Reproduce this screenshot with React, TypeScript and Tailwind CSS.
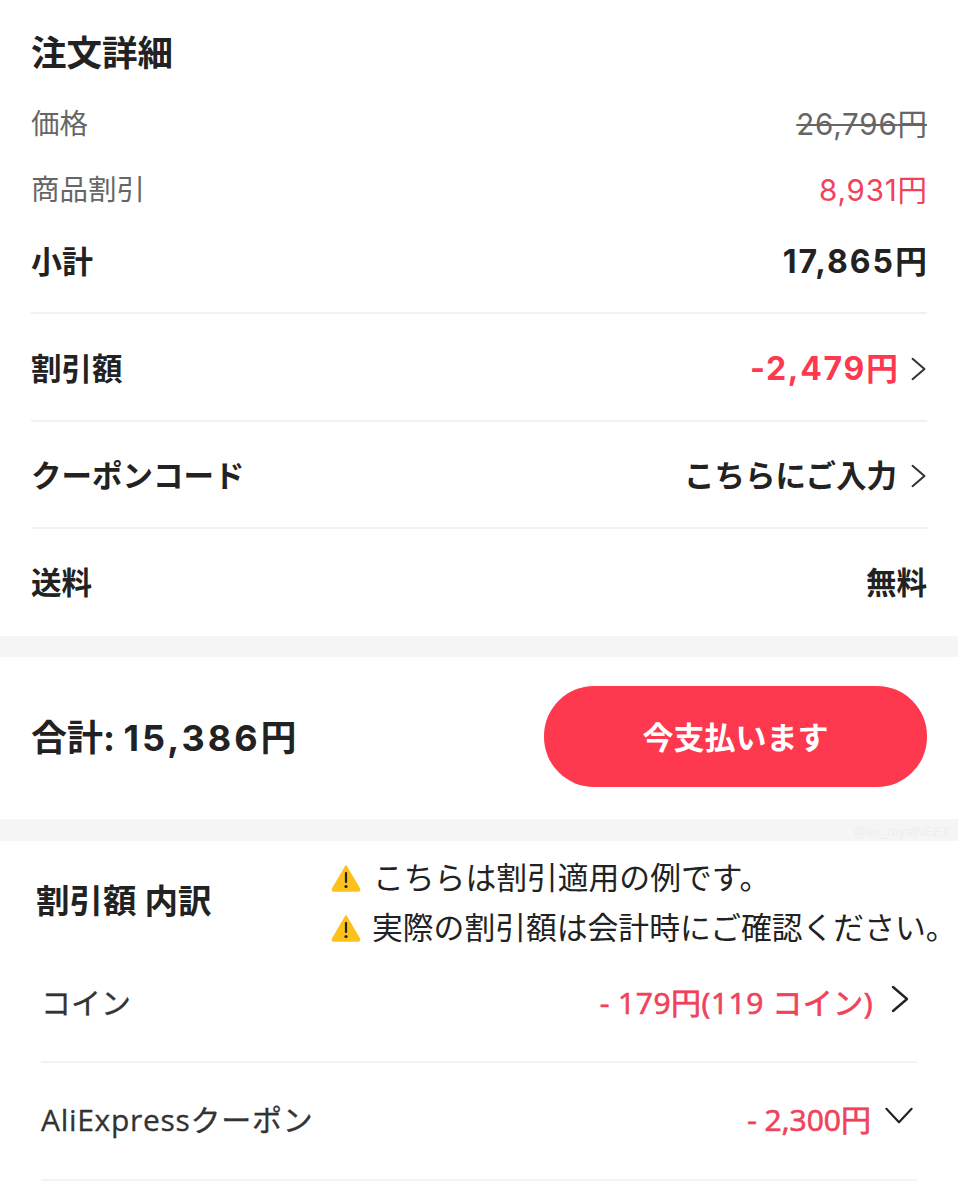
import type { ReactNode } from 'react';

const FONT = "font-['Inter','Noto_Sans_CJK_JP',sans-serif]";
const FONT_LOWER = "font-['Open_Sans','Noto_Sans_CJK_JP',sans-serif]";
const MEDIUM = '[-webkit-text-stroke:0.7px_currentColor]';

function ChevronRight({ className }: { className?: string }) {
    return (
        <svg viewBox="0 0 20 28" fill="none" className={className}>
            <path d="M3 2 L17 14 L3 26" stroke="currentColor" strokeWidth="2.4" strokeLinecap="round" strokeLinejoin="round" />
        </svg>
    );
}

function ChevronDown({ className }: { className?: string }) {
    return (
        <svg viewBox="0 0 32 20" fill="none" className={className}>
            <path d="M2 2 L16 17 L30 2" stroke="currentColor" strokeWidth="2.4" strokeLinecap="round" strokeLinejoin="round" />
        </svg>
    );
}

function WarningIcon() {
    return (
        <svg viewBox="0 0 30 28" className="w-[30px] h-[28px] shrink-0">
            <path d="M15 2 L28.5 25 Q29 27 27 27 L3 27 Q1 27 1.5 25 Z" fill="#fcc21b" stroke="#fcc21b" strokeWidth="1.5" strokeLinejoin="round" />
            <rect x="13.9" y="8" width="2.2" height="11" rx="1" fill="#222222" />
            <circle cx="15" cy="22.5" r="1.6" fill="#222222" />
        </svg>
    );
}

function DetailRow({ label, children }: { label: string; children: ReactNode }) {
    return (
        <div className="flex items-center justify-between h-[105px] pt-[2px] text-[#222222] text-[30.5px] font-bold">
            <span>{label}</span>
            {children}
        </div>
    );
}

export default function App() {
    return (
        <div className={`w-[958px] h-[1200px] overflow-hidden bg-white ${FONT}`}>
            {/* Order details */}
            <section className="h-[636px] px-[31px] pt-[32px]">
                <h2 className="h-[44px] leading-[44px] text-[35.5px] font-bold text-[#222222]">注文詳細</h2>
                <div className="mt-[14px] pt-[2px] flex items-center justify-between h-[66px] text-[28.5px] text-[#666666]">
                    <span>価格</span>
                    <span className="line-through text-[29.5px]"><span className="tracking-[0.8px]">26,796</span>円</span>
                </div>
                <div className="flex items-center justify-between h-[66px] pt-[2px] text-[28.5px] text-[#666666]">
                    <span>商品割引</span>
                    <span className="text-[29.5px] text-[#f0425a]"><span className="tracking-[0.8px]">8,931</span>円</span>
                </div>
                <div className="flex items-center justify-between h-[80px] mb-[10px] text-[31px] font-bold text-[#222222]">
                    <span>小計</span>
                    <span className="text-[32px]"><span className="tracking-[2px]">17,865</span>円</span>
                </div>
                <div className="h-[2px] mb-[1px] bg-[#f1f1f1]" />
                <DetailRow label="割引額">
                    <span className="flex items-center gap-[12px] text-[32px] text-[#fd384f]">
                        <span><span className="tracking-[1.7px]">-2,479</span>円</span>
                        <ChevronRight className="w-[17px] h-[26px] text-[#333333]" />
                    </span>
                </DetailRow>
                <div className="h-[2px] bg-[#f1f1f1]" />
                <DetailRow label="クーポンコード">
                    <span className="flex items-center gap-[13px]">
                        こちらにご入力
                        <ChevronRight className="w-[17px] h-[26px] text-[#333333]" />
                    </span>
                </DetailRow>
                <div className="h-[2px] bg-[#f1f1f1]" />
                <DetailRow label="送料">
                    <span>無料</span>
                </DetailRow>
            </section>

            <div className="h-[21px] bg-[#f5f5f5]" />

            {/* Total */}
            <section className="h-[162px] px-[31px] flex items-center justify-between">
                <span className="text-[36px] font-bold text-[#222222]">
                    合計: <span className="tracking-[3px]">15,386</span>円
                </span>
                <button className="-mt-[4px] pt-[4px] w-[383px] h-[101px] rounded-[50px] bg-[#fd384f] text-white text-[31px] font-bold">
                    今支払います
                </button>
            </section>

            <div className="relative h-[22px] bg-[#f5f5f5]">
                <span className="absolute right-[8px] top-[3px] text-[13px] text-[#eeeeee] font-['Liberation_Sans',sans-serif]">@ex_royalNEET</span>
            </div>

            {/* Discount breakdown */}
            <section className={`px-[41px] ${FONT_LOWER}`}>
                <div className={`flex items-center h-[120px] ${FONT}`}>
                    <h3 className="-ml-[5px] w-[295px] shrink-0 text-[33.5px] font-bold text-[#222222] leading-[40px]">割引額 内訳</h3>
                    <div className="shrink-0 pt-[4px] flex flex-col gap-[14px] text-[30.8px] leading-[36px] text-[#222222] whitespace-nowrap">
                        <div className="flex items-center gap-[12px]"><WarningIcon />こちらは割引適用の例です。</div>
                        <div className="flex items-center gap-[11px]"><WarningIcon />実際の割引額は会計時にご確認ください。</div>
                    </div>
                </div>
                <div className="flex items-center justify-between h-[100px] pb-[18px] text-[30px] text-[#333333]">
                    <span className="[-webkit-text-stroke:0.3px_currentColor]">コイン</span>
                    <span className={`flex items-center text-[#f0425a] tracking-[0.5px] ${MEDIUM}`}>
                        - 179円(119 コイン)
                        <ChevronRight className="ml-[17px] -mt-[6px] mr-[7px] w-[20px] h-[28px] text-[#222222] [-webkit-text-stroke:0]" />
                    </span>
                </div>
                <div className="h-[2px] bg-[#f3f3f3]" />
                <div className="flex items-center justify-between h-[116px] pb-[4px] text-[30px] text-[#333333]">
                    <span className="tracking-[0.7px] [-webkit-text-stroke:0.3px_currentColor]">AliExpressクーポン</span>
                    <span className={`flex items-center text-[#f0425a] ${MEDIUM}`}>
                        - 2,300円
                        <ChevronDown className="ml-[13px] -mt-[6px] mr-[3px] w-[30px] h-[18px] text-[#222222] [-webkit-text-stroke:0]" />
                    </span>
                </div>
                <div className="h-[2px] bg-[#f3f3f3]" />
            </section>
        </div>
    );
}
